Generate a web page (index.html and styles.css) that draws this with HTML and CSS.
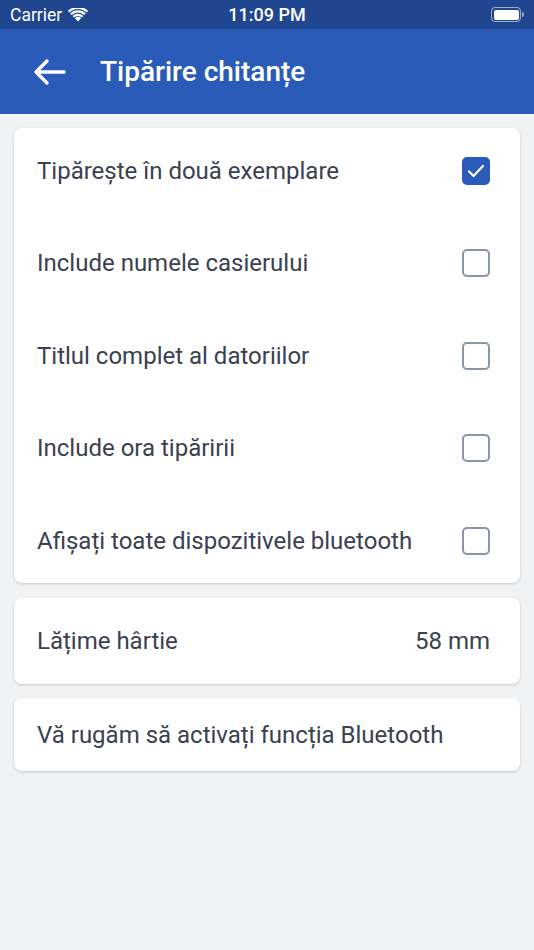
FILE: index.html
```html
<!DOCTYPE html>
<html lang="ro">

<head>
    <meta charset="UTF-8">
    <meta name="viewport" content="width=device-width, initial-scale=1.0">
    <title>Tipărire chitanțe</title>
    <link rel="stylesheet" href="styles.css">
</head>

<body>
    <div class="statusBar">
        <div class="carrier">
            Carrier
            <svg width="20" height="14" viewBox="0 0 20 14">
                <path d="M10 13.5 L6.9 10.2 A4.5 4.5 0 0 1 13.1 10.2 Z" fill="#fff"/>
                <path d="M4.6 7.9 A7.8 7.8 0 0 1 15.4 7.9 L13.9 9.5 A5.6 5.6 0 0 0 6.1 9.5 Z" fill="#fff"/>
                <path d="M2.2 5.4 A11.2 11.2 0 0 1 17.8 5.4 L16.3 7 A9 9 0 0 0 3.7 7 Z" fill="#fff"/>
                <path d="M-0.2 2.9 A14.6 14.6 0 0 1 20.2 2.9 L18.7 4.5 A12.4 12.4 0 0 0 1.3 4.5 Z" fill="#fff"/>
            </svg>
        </div>
        <div class="clock">11:09 PM</div>
        <div class="battery">
            <span class="batteryBody"><span class="batteryFill"></span></span>
            <span class="batteryTip"></span>
        </div>
    </div>

    <header class="appBar">
        <svg class="backIcon" width="34" height="28" viewBox="0 0 34 28">
            <path d="M32 14 H4 M15 3 L4 14 L15 25" fill="none" stroke="#fff" stroke-width="3.4" stroke-linecap="round" stroke-linejoin="round"/>
        </svg>
        <h1 class="title">Tipărire chitanțe</h1>
    </header>

    <main class="content">
        <section class="card list">
            <div class="row">
                <span>Tipărește în două exemplare</span>
                <span class="check checked">
                    <svg width="18" height="14" viewBox="0 0 18 14">
                        <path d="M2 7.5 L6.5 12 L16 2" fill="none" stroke="#fff" stroke-width="2.2" stroke-linecap="round" stroke-linejoin="round"/>
                    </svg>
                </span>
            </div>
            <div class="row">
                <span>Include numele casierului</span>
                <span class="check"></span>
            </div>
            <div class="row">
                <span>Titlul complet al datoriilor</span>
                <span class="check"></span>
            </div>
            <div class="row">
                <span>Include ora tipăririi</span>
                <span class="check"></span>
            </div>
            <div class="row">
                <span>Afișați toate dispozitivele bluetooth</span>
                <span class="check"></span>
            </div>
        </section>

        <section class="card">
            <div class="row short">
                <span>Lățime hârtie</span>
                <span>58 mm</span>
            </div>
        </section>

        <section class="card">
            <div class="row notice">
                <span>Vă rugăm să activați funcția Bluetooth</span>
            </div>
        </section>
    </main>
</body>

</html>
```

FILE: styles.css
```css
* {
    box-sizing: border-box;
}
body {
    margin: 0;
    background-color: #f1f2f4;
    font-family: Roboto, "Noto Sans", sans-serif;
    height: 950px;
}
.statusBar {
    height: 29px;
    background-color: #1f468f;
    color: white;
    font-family: Roboto, sans-serif;
    display: flex;
    align-items: center;
    justify-content: space-between;
    padding: 0 10px 0 10px;
    position: relative;
}
.carrier {
    display: flex;
    align-items: center;
    gap: 6px;
    font-size: 17.5px;
}
.clock {
    position: absolute;
    left: 0;
    right: 0;
    text-align: center;
    font-size: 18px;
    font-weight: 500;
    pointer-events: none;
}
.battery {
    display: flex;
    align-items: center;
    gap: 1px;
}
.batteryBody {
    width: 30px;
    height: 15px;
    border: 1.5px solid rgba(255, 255, 255, 0.55);
    border-radius: 4px;
    padding: 1.5px;
    display: flex;
}
.batteryFill {
    flex: 1;
    background-color: white;
    border-radius: 2px;
}
.batteryTip {
    width: 2px;
    height: 5px;
    background-color: rgba(255, 255, 255, 0.55);
    border-radius: 0 2px 2px 0;
}
.appBar {
    height: 85px;
    background-color: #2b5bb8;
    display: flex;
    align-items: center;
    padding-left: 32px;
    gap: 34px;
}
.title {
    margin: 0;
    color: white;
    font-size: 28px;
    font-weight: 500;
}
.content {
    padding: 14px 14px;
    display: flex;
    flex-direction: column;
    gap: 14.5px;
}
.card {
    background-color: white;
    border-radius: 8px;
    box-shadow: 0 1px 3px rgba(0, 0, 0, 0.18);
}
.row {
    height: 91px;
    display: flex;
    align-items: center;
    justify-content: space-between;
    padding: 0 30px 0 23px;
    color: #3a4150;
    font-size: 24px;
}
.list .row {
    height: 92.5px;
}
.list .row:first-child {
    margin-top: -3.5px;
}
.list .row:last-child {
    margin-bottom: -4px;
}
.row.short {
    height: 86px;
}
.row.notice {
    height: 73px;
}
.check {
    width: 28px;
    height: 28px;
    border: 2px solid #8a94aa;
    border-radius: 5px;
    display: flex;
    align-items: center;
    justify-content: center;
}
.check.checked {
    background-color: #2b5bb8;
    border-color: #2b5bb8;
}
```
